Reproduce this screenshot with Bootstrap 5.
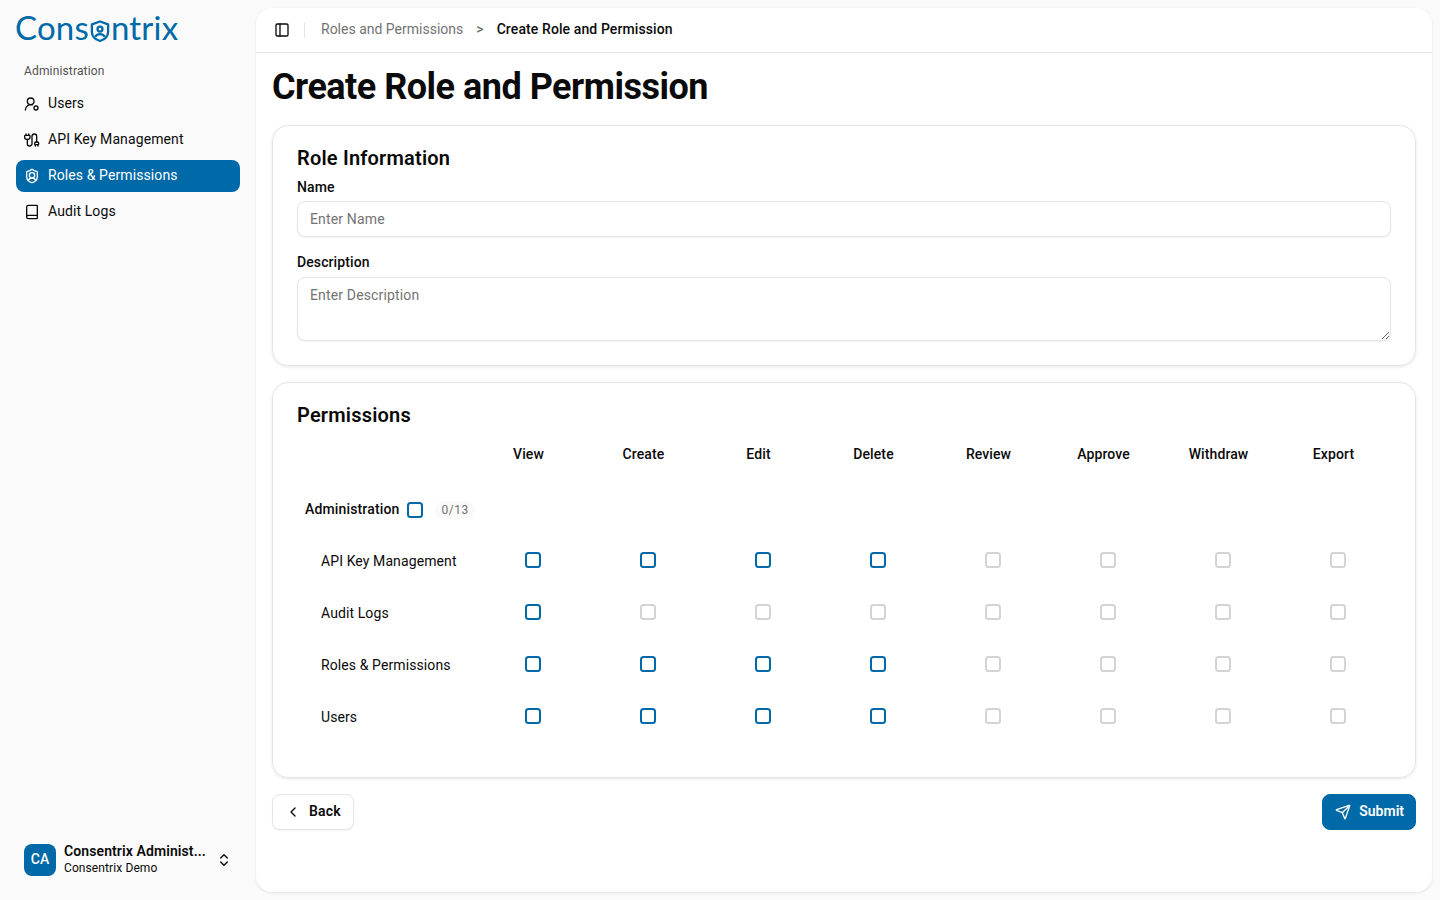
<!DOCTYPE html>
<html lang="en">
<head>
  <meta charset="UTF-8" />
  <meta name="viewport" content="width=device-width, initial-scale=1.0"/>
  <title>Create Role and Permission | Consentrix</title>
  <link href="https://cdn.jsdelivr.net/npm/bootstrap@5.3.0/dist/css/bootstrap.min.css" rel="stylesheet"/>
  <style>
    :root { --brand: #0069a8; --ink: #0a0a0a; --line: #e5e5e5; }
    html, body { height: 100%; }
    body {
      font-family: Roboto, "Liberation Sans", sans-serif;
      font-size: 14px;
      letter-spacing: .1px;
      color: var(--ink);
      background: #fafafa;
      overflow: hidden;
    }
    svg.ico { width: 16px; height: 16px; fill: none; stroke: currentColor; stroke-width: 2; stroke-linecap: round; stroke-linejoin: round; flex: none; }

    .side-bar { width: 256px; height: 100vh; flex: none; }
    .brand-logo { height: 56px; padding: 7px 0 0 15px; font-family: Lato, sans-serif; font-size: 33px; line-height: 40px; color: var(--brand); letter-spacing: .2px; }
    .brand-logo svg { width: 20px; height: 24px; vertical-align: -3px; margin: 0 1px; }
    .group-label { font-size: 12px; color: #525252; padding: 0 8px; height: 32px; line-height: 30px; letter-spacing: .15px; }
    .side-link { height: 32px; padding: 0 8px; gap: 8px; border-radius: 8px; color: var(--ink); text-decoration: none; margin-bottom: 4px; }
    .side-link span { padding-bottom: 2px; }
    .side-link.is-active { background: var(--brand); color: #fff; }
    .user-box { padding: 0 24px 24px 24px; gap: 8px; }
    .user-pic { width: 32px; height: 32px; border-radius: 8px; background: var(--brand); color: #fff; font-weight: 500; }
    .user-name { font-weight: 600; line-height: 17px; white-space: nowrap; }
    .user-org { font-size: 12px; line-height: 16px; }

    .main-pane { margin: 8px 8px 8px 0; background: #fff; border-radius: 16px; box-shadow: 0 1px 3px rgba(0,0,0,.1); overflow: hidden; }
    .top-bar { height: 45px; padding: 0 16px 1px 18px; border-bottom: 1px solid var(--line); }
    .top-sep { width: 1px; height: 16px; background: var(--line); margin: 0 16px 0 14px; }
    .top-bar .breadcrumb { --bs-breadcrumb-margin-bottom: 0; --bs-breadcrumb-item-padding-x: 13px; --bs-breadcrumb-divider: '>'; --bs-breadcrumb-divider-color: #737373; }
    .top-bar .breadcrumb-item { color: #737373; letter-spacing: 0; }
    .top-bar .breadcrumb-item.active { color: var(--ink); font-weight: 500; letter-spacing: .1px; }
    .page-head { font-size: 36px; font-weight: 700; line-height: 40px; margin: 14px 0 18px; letter-spacing: -.5px; }

    .form-panel { border: 1px solid var(--line); border-radius: 16px; box-shadow: 0 1px 3px rgba(0,0,0,.1); padding: 24px; margin-bottom: 16px; }
    .panel-head { font-size: 20px; font-weight: 600; line-height: 16px; margin-bottom: 11px; letter-spacing: .2px; }
    .field-label { font-weight: 500; line-height: 20px; margin-bottom: 4px; display: block; }
    .form-panel .form-control { font-size: 14px; letter-spacing: .15px; border-color: var(--line); border-radius: 8px; padding: 8px 12px; color: var(--ink); box-shadow: 0 1px 2px rgba(0,0,0,.05); }
    .form-panel .form-control::placeholder { color: #737373; }
    .name-input { height: 36px; margin-bottom: 15px; }
    .desc-label { margin-bottom: 5px; }
    .form-panel .desc-input { height: 64px; padding-top: 7px; }

    .perm-grid { table-layout: fixed; width: 100%; margin: 0 0 11px; }
    .perm-grid th, .perm-grid td { padding: 0; vertical-align: middle; text-align: center; border: 0; }
    .perm-grid thead th { height: 39px; padding-top: 2px; font-weight: 500; }
    .perm-grid .name-col { width: 174px; text-align: left; }
    .perm-grid tbody tr { height: 52px; }
    .perm-grid .group-row { height: 61px; }
    .perm-grid .group-row td { padding: 11px 0 0 8px; font-weight: 500; text-align: left; letter-spacing: .15px; }
    .perm-grid .item-name { padding: 2px 0 0 24px; text-align: left; }
    .perm-grid .tick-cell { padding-left: 9px; line-height: 0; }
    .tick { width: 16px; height: 16px; margin: 0; border: 2px solid var(--brand); border-radius: 4px; }
    .tick:disabled { border-color: #d4d4d4; opacity: 1; background-color: #fff; }
    .group-tick { margin-left: 8px; }
    .count-pill { font-size: 12px; color: #737373; background: #fafafa; border-radius: 10px; padding: 2px 6px; font-weight: 400; margin-left: 12px; letter-spacing: .5px; }

    .act-btn { height: 36px; border-radius: 8px; font-size: 14px; font-weight: 600; gap: 8px; padding: 0 12px 1px; }
    .act-back { background: #fff; border: 1px solid var(--line); color: var(--ink); letter-spacing: .2px; box-shadow: 0 1px 2px rgba(0,0,0,.05); }
    .act-submit { background: var(--brand); border: 1px solid var(--brand); color: #fff; padding-right: 11px; }
  </style>
</head>
<body>
  <div class="d-flex">
    <aside class="side-bar d-flex flex-column">
      <div class="brand-logo">Cons<svg viewBox="0 0 21 24" fill="none" stroke="#0069a8" stroke-width="2.4" stroke-linejoin="round"><path d="M10.5 2 19 5v8c0 5-4 8-8.500 9.500C6 21 2 18 2 13V5z"/><circle cx="10.500" cy="10" r="2.600"/><path d="M5.500 18a6 6 0 0 1 10 0"/></svg>ntrix</div>
      <div class="px-3">
        <div class="group-label">Administration</div>
        <a href="#" class="side-link d-flex align-items-center">
          <svg class="ico" viewBox="0 0 24 24"><path d="M2 21a8 8 0 0 1 10.400-7.600"/><circle cx="10" cy="8" r="5"/><circle cx="18" cy="18" r="3"/></svg><span>Users</span></a>
        <a href="#" class="side-link d-flex align-items-center">
          <svg class="ico" viewBox="0 0 24 24"><path d="M17 21v-2a1 1 0 0 1-1-1v-1a2 2 0 0 1 2-2h2a2 2 0 0 1 2 2v1a1 1 0 0 1-1 1"/><path d="M19 15V6.500a3.500 3.500 0 0 0-7 0v11a3.500 3.500 0 0 1-7 0V11"/><path d="M21 21v-2h-4"/><path d="M3 5V3"/><path d="M7 5V3"/><path d="M2 5h6a1 1 0 0 1 1 1v2a3 3 0 0 1-3 3H4a3 3 0 0 1-3-3V6a1 1 0 0 1 1-1z"/></svg><span>API Key Management</span></a>
        <a href="#" class="side-link is-active d-flex align-items-center">
          <svg class="ico" viewBox="0 0 24 24"><path d="M20 13c0 5-3.500 7.500-7.660 8.950a1 1 0 0 1-.67-.010C7.500 20.500 4 18 4 13V6a1 1 0 0 1 1-1c2 0 4.500-1.200 6.240-2.720a1.170 1.170 0 0 1 1.520 0C14.510 3.810 17 5 19 5a1 1 0 0 1 1 1z"/><path d="M6.400 18.900a6 6 0 0 1 11.200 0"/><circle cx="12" cy="11" r="4"/></svg><span>Roles &amp; Permissions</span></a>
        <a href="#" class="side-link d-flex align-items-center">
          <svg class="ico" viewBox="0 0 24 24"><path d="M4 19.500v-15A2.500 2.500 0 0 1 6.500 2H19a1 1 0 0 1 1 1v18a1 1 0 0 1-1 1H6.500a1 1 0 0 1 0-5H20"/></svg><span>Audit Logs</span></a>
      </div>
      <div class="user-box d-flex align-items-center mt-auto">
        <div class="user-pic d-flex align-items-center justify-content-center flex-shrink-0">CA</div>
        <div class="flex-grow-1">
          <div class="user-name">Consentrix Administ...</div>
          <div class="user-org">Consentrix Demo</div>
        </div>
        <svg class="ico" viewBox="0 0 24 24"><path d="m7 15 5 5 5-5"/><path d="m7 9 5-5 5 5"/></svg>
      </div>
    </aside>

    <main class="main-pane flex-grow-1">
      <div class="top-bar d-flex align-items-center">
        <svg class="ico" viewBox="0 0 24 24"><rect width="18" height="18" x="3" y="3" rx="2"/><path d="M9 3v18"/></svg>
        <span class="top-sep"></span>
        <nav aria-label="breadcrumb">
          <ol class="breadcrumb">
            <li class="breadcrumb-item">Roles and Permissions</li>
            <li class="breadcrumb-item active" aria-current="page">Create Role and Permission</li>
          </ol>
        </nav>
      </div>
      <div class="px-3">
        <h1 class="page-head">Create Role and Permission</h1>

        <section class="form-panel">
          <h2 class="panel-head">Role Information</h2>
          <label class="field-label" for="roleName">Name</label>
          <input id="roleName" class="form-control name-input" type="text" placeholder="Enter Name"/>
          <label class="field-label desc-label" for="roleDesc">Description</label>
          <textarea id="roleDesc" class="form-control desc-input" placeholder="Enter Description"></textarea>
        </section>

        <section class="form-panel">
          <h2 class="panel-head">Permissions</h2>
          <table class="perm-grid">
            <thead>
              <tr><th class="name-col"></th><th>View</th><th>Create</th><th>Edit</th><th>Delete</th><th>Review</th><th>Approve</th><th>Withdraw</th><th>Export</th></tr>
            </thead>
            <tbody>
              <tr class="group-row">
                <td colspan="9">Administration<input class="form-check-input tick group-tick align-middle" type="checkbox" aria-label="Administration"/><span class="count-pill">0/13</span></td>
              </tr>
              <tr>
                <td class="item-name">API Key Management</td>
                <td class="tick-cell"><input class="form-check-input tick" type="checkbox"/></td>
                <td class="tick-cell"><input class="form-check-input tick" type="checkbox"/></td>
                <td class="tick-cell"><input class="form-check-input tick" type="checkbox"/></td>
                <td class="tick-cell"><input class="form-check-input tick" type="checkbox"/></td>
                <td class="tick-cell"><input class="form-check-input tick" type="checkbox" disabled/></td>
                <td class="tick-cell"><input class="form-check-input tick" type="checkbox" disabled/></td>
                <td class="tick-cell"><input class="form-check-input tick" type="checkbox" disabled/></td>
                <td class="tick-cell"><input class="form-check-input tick" type="checkbox" disabled/></td>
              </tr>
              <tr>
                <td class="item-name">Audit Logs</td>
                <td class="tick-cell"><input class="form-check-input tick" type="checkbox"/></td>
                <td class="tick-cell"><input class="form-check-input tick" type="checkbox" disabled/></td>
                <td class="tick-cell"><input class="form-check-input tick" type="checkbox" disabled/></td>
                <td class="tick-cell"><input class="form-check-input tick" type="checkbox" disabled/></td>
                <td class="tick-cell"><input class="form-check-input tick" type="checkbox" disabled/></td>
                <td class="tick-cell"><input class="form-check-input tick" type="checkbox" disabled/></td>
                <td class="tick-cell"><input class="form-check-input tick" type="checkbox" disabled/></td>
                <td class="tick-cell"><input class="form-check-input tick" type="checkbox" disabled/></td>
              </tr>
              <tr>
                <td class="item-name">Roles &amp; Permissions</td>
                <td class="tick-cell"><input class="form-check-input tick" type="checkbox"/></td>
                <td class="tick-cell"><input class="form-check-input tick" type="checkbox"/></td>
                <td class="tick-cell"><input class="form-check-input tick" type="checkbox"/></td>
                <td class="tick-cell"><input class="form-check-input tick" type="checkbox"/></td>
                <td class="tick-cell"><input class="form-check-input tick" type="checkbox" disabled/></td>
                <td class="tick-cell"><input class="form-check-input tick" type="checkbox" disabled/></td>
                <td class="tick-cell"><input class="form-check-input tick" type="checkbox" disabled/></td>
                <td class="tick-cell"><input class="form-check-input tick" type="checkbox" disabled/></td>
              </tr>
              <tr>
                <td class="item-name">Users</td>
                <td class="tick-cell"><input class="form-check-input tick" type="checkbox"/></td>
                <td class="tick-cell"><input class="form-check-input tick" type="checkbox"/></td>
                <td class="tick-cell"><input class="form-check-input tick" type="checkbox"/></td>
                <td class="tick-cell"><input class="form-check-input tick" type="checkbox"/></td>
                <td class="tick-cell"><input class="form-check-input tick" type="checkbox" disabled/></td>
                <td class="tick-cell"><input class="form-check-input tick" type="checkbox" disabled/></td>
                <td class="tick-cell"><input class="form-check-input tick" type="checkbox" disabled/></td>
                <td class="tick-cell"><input class="form-check-input tick" type="checkbox" disabled/></td>
              </tr>
            </tbody>
          </table>
        </section>

        <div class="d-flex justify-content-between">
          <button class="btn act-btn act-back d-flex align-items-center" type="button">
            <svg class="ico" viewBox="0 0 24 24"><path d="m15 18-6-6 6-6"/></svg>Back</button>
          <button class="btn act-btn act-submit d-flex align-items-center" type="button">
            <svg class="ico" viewBox="0 0 24 24"><path d="M14.536 21.686a.5.5 0 0 0 .937-.024l6.500-19a.496.496 0 0 0-.635-.635l-19 6.500a.5.5 0 0 0-.024.937l7.930 3.180a2 2 0 0 1 1.112 1.110z"/><path d="m21.854 2.147-10.940 10.939"/></svg>Submit</button>
        </div>
      </div>
    </main>
  </div>
</body>
</html>
